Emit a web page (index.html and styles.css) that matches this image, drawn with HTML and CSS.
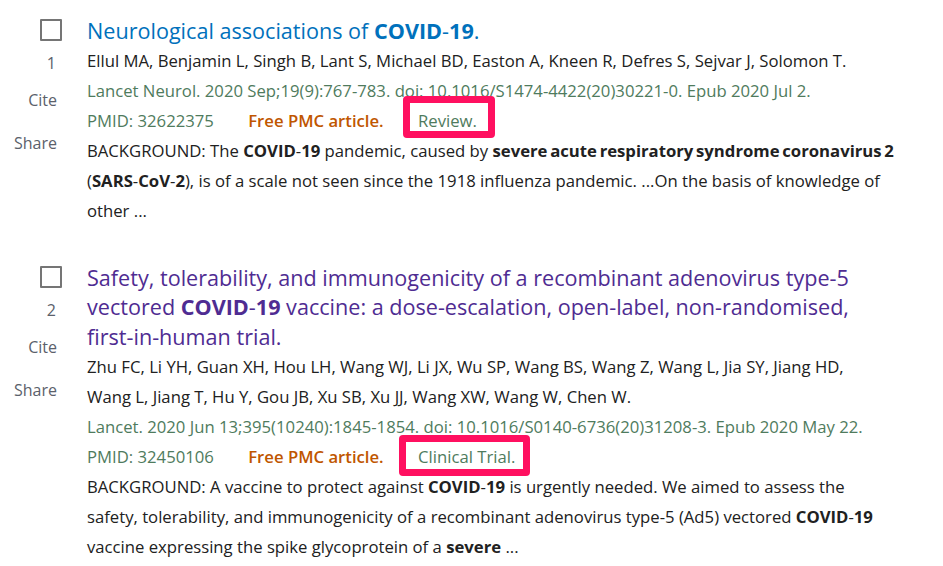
FILE: index.html
```html
<!DOCTYPE html>
<html>
<head>
  <meta charset="utf-8">
  <title>Search results</title>
  <link rel="stylesheet" href="styles.css">
</head>
<body>
  <div class="search-results">

    <article class="docsum">
      <div class="docsum-side">
        <span class="checkbox"></span>
        <span class="position">1</span>
        <span class="side-action">Cite</span>
        <span class="side-action">Share</span>
      </div>
      <div class="docsum-content">
        <a class="docsum-title" href="#">Neurological associations of <b>COVID</b>-<b>19</b>.</a>
        <div class="docsum-citation">
          <span class="docsum-authors">Ellul MA, Benjamin L, Singh B, Lant S, Michael BD, Easton A, Kneen R, Defres S, Sejvar J, Solomon T.</span>
          <span class="docsum-journal">Lancet Neurol. 2020 Sep;19(9):767-783. doi: 10.1016/S1474-4422(20)30221-0. Epub 2020 Jul 2.</span>
          <span class="docsum-meta">
            <span class="docsum-pmid">PMID: 32622375</span>
            <span class="free-resources">Free PMC article.</span>
            <span class="publication-type highlight highlight-review">Review.</span>
          </span>
        </div>
        <div class="docsum-snippet">BACKGROUND: The <b>COVID</b>-<b>19</b> pandemic, caused by <b>severe acute respiratory syndrome coronavirus 2</b> (<b>SARS</b>-<b>CoV</b>-<b>2</b>), is of a scale not seen since the 1918 influenza pandemic. ...On the basis of knowledge of other ...</div>
      </div>
    </article>

    <article class="docsum">
      <div class="docsum-side">
        <span class="checkbox"></span>
        <span class="position">2</span>
        <span class="side-action">Cite</span>
        <span class="side-action">Share</span>
      </div>
      <div class="docsum-content">
        <a class="docsum-title visited" href="#">Safety, tolerability, and immunogenicity of a recombinant adenovirus type-5 vectored <b>COVID</b>-<b>19</b> vaccine: a dose-escalation, open-label, non-randomised, first-in-human trial.</a>
        <div class="docsum-citation">
          <span class="docsum-authors">Zhu FC, Li YH, Guan XH, Hou LH, Wang WJ, Li JX, Wu SP, Wang BS, Wang Z, Wang L, Jia SY, Jiang HD, Wang&nbsp;L, Jiang T, Hu Y, Gou JB, Xu SB, Xu JJ, Wang XW, Wang W, Chen W.</span>
          <span class="docsum-journal">Lancet. 2020 Jun 13;395(10240):1845-1854. doi: 10.1016/S0140-6736(20)31208-3. Epub 2020 May 22.</span>
          <span class="docsum-meta">
            <span class="docsum-pmid">PMID: 32450106</span>
            <span class="free-resources">Free PMC article.</span>
            <span class="publication-type highlight highlight-trial">Clinical Trial.</span>
          </span>
        </div>
        <div class="docsum-snippet">BACKGROUND: A vaccine to protect against <b>COVID</b>-<b>19</b> is urgently needed. We aimed to assess the safety, tolerability, and immunogenicity of a recombinant adenovirus type-5 (Ad5) vectored <b>COVID</b>-<b>19</b> vaccine expressing the spike glycoprotein of a <b>severe</b> ...</div>
      </div>
    </article>

  </div>
</body>
</html>
```

FILE: styles.css
```css
* {
  box-sizing: border-box;
  margin: 0;
  padding: 0;
}

body {
  font-family: 'Open Sans', 'Noto Sans', sans-serif;
  font-size: 16.7px;
  line-height: 30px;
  color: #212121;
  background: #fff;
  width: 943px;
  height: 566px;
  overflow: hidden;
}

.search-results {
  padding: 16px 0 0 0;
  display: flex;
  flex-direction: column;
  gap: 37px;
}

.docsum {
  display: flex;
}

.docsum-side {
  width: 62px;
  margin-right: 25px;
  display: flex;
  flex-direction: column;
  align-items: flex-end;
  color: #5b616b;
  font-size: 16px;
}

.checkbox {
  width: 22px;
  height: 22px;
  margin-top: 3px;
  border: 2px solid #757575;
  border-radius: 1px;
  margin-bottom: 7px;
}

.position {
  margin-right: 6px;
  line-height: 30px;
}

.side-action {
  line-height: 30px;
  margin-top: 7px;
  margin-right: 5px;
}

.side-action + .side-action {
  margin-top: 13px;
}

.docsum-content {
  width: 809px;
}

.docsum-title {
  display: block;
  font-size: 21.6px;
  line-height: 29.7px;
  color: #0071bc;
  text-decoration: none;
}

.docsum-title b {
  font-weight: 700;
}

.docsum-title.visited {
  color: #4f2c92;
}

.docsum-citation span {
  display: block;
}

.docsum-citation .docsum-meta span {
  display: inline;
}

.docsum-journal,
.docsum-pmid,
.publication-type {
  color: #4f7b5d;
}

.docsum-pmid,
.free-resources {
  margin-right: 30px;
}

.free-resources {
  color: #c05600;
  font-weight: 600;
}

.highlight {
  position: relative;
}

.highlight::after {
  content: '';
  position: absolute;
  border: 7px solid #ff1060;
  border-radius: 4px;
}

.highlight-review::after {
  left: -15px;
  right: -18px;
  top: -13px;
  bottom: -6px;
}

.highlight-trial::after {
  left: -19px;
  right: -15px;
  top: -10px;
  bottom: -8px;
}

.docsum-snippet b {
  font-weight: 700;
  word-spacing: -1.6px;
}
```
